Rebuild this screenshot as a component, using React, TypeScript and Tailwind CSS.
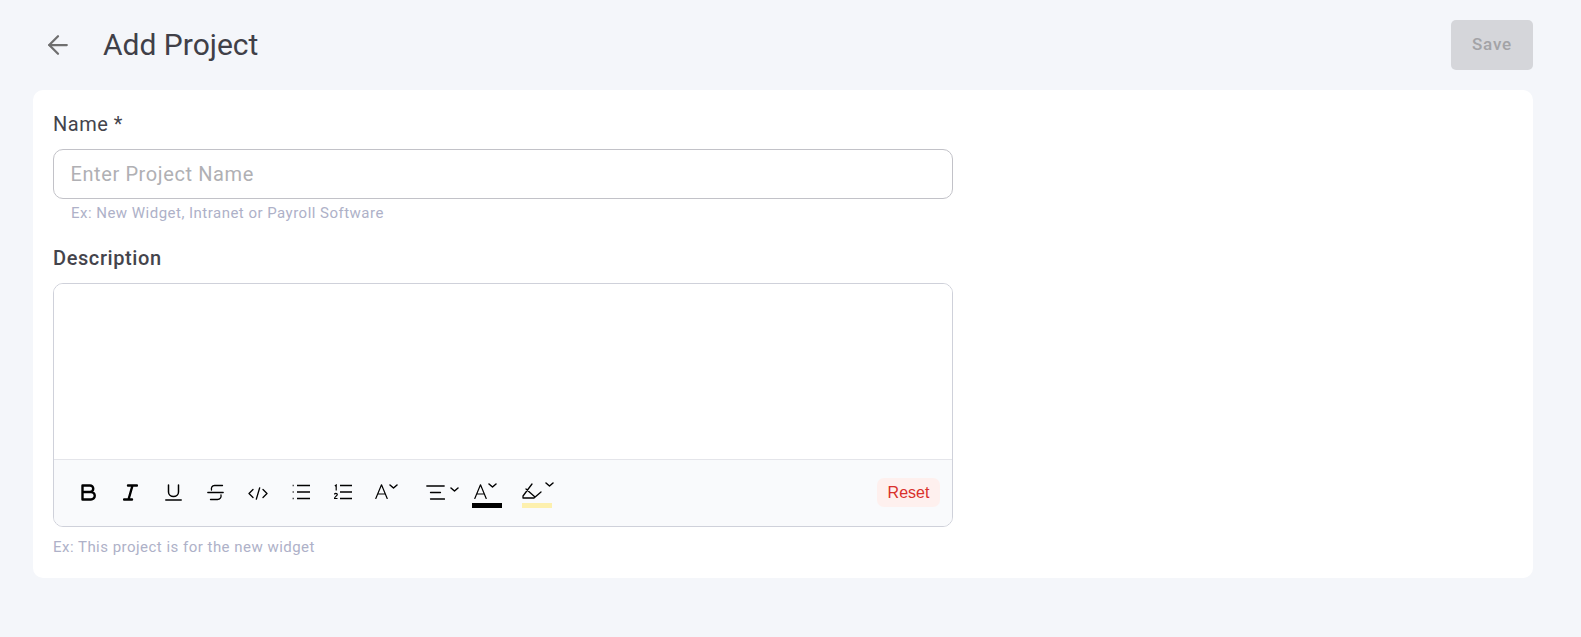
import { ArrowLeft } from "lucide-react";

const stroke = { fill: "none", stroke: "currentColor", strokeWidth: 1.5, strokeLinecap: "round", strokeLinejoin: "round" } as const;

const Chevron = ({ className }: { className: string }) => (
  <svg viewBox="0 0 9 5" className={`h-[5px] w-[9px] shrink-0 ${className}`} {...stroke} strokeWidth={1.5}>
    <path d="M1 1l3.500 3L8 1" />
  </svg>
);

const LetterA = ({ className }: { className: string }) => (
  <svg viewBox="0 0 13 15" className={`h-[15px] w-[13px] shrink-0 ${className}`} {...stroke} strokeWidth={1.2}>
    <path d="M.8 14.500L6.500.8l5.700 13.700M2.800 10h7.400" />
  </svg>
);

export default function App() {
  return (
    <div className="min-h-screen bg-[#f4f6fa] px-[33px] pt-5 pb-[59px] font-['Roboto',sans-serif] text-[#3d3d3d]">
      {/* Header */}
      <header className="flex h-[50px] items-center justify-between pr-[15px]">
        <div className="flex items-center">
          <ArrowLeft className="ml-[10px] h-[30px] w-[30px] text-[#6f6f6f]" strokeWidth={1.8} />
          <h1 className="ml-[30px] text-[30px] leading-[36px] font-normal text-[#404048]">Add Project</h1>
        </div>
        <button className="h-[50px] w-[82px] rounded-[5px] bg-[#d5d6da] text-[17px] font-medium tracking-[0.8px] text-[#a3a3a6]">
          Save
        </button>
      </header>

      {/* Form card */}
      <main className="mt-5 mr-[15px] h-[488px] rounded-[10px] bg-white px-5 pt-[22px]">
        <div className="w-[900px]">
          <label className="block text-[20px] leading-[24px] tracking-[0.5px] text-[#44444c]">Name *</label>
          <input
            placeholder="Enter Project Name"
            className="mt-[13px] h-[50px] w-full rounded-[10px] border border-[#c2c2c8] px-[16.500px] text-[20px] tracking-[0.6px] outline-none placeholder:text-[#b0b0b4]"
          />
          <p className="mt-[5px] pl-[18px] text-[15px] leading-[18px] tracking-[0.48px] text-[#aeb1c8]">
            Ex: New Widget, Intranet or Payroll Software
          </p>

          <label className="mt-[24px] block text-[20px] leading-[24px] font-medium tracking-[0.6px] text-[#44444c]">Description</label>
          <div className="mt-[13px] flex h-[244px] flex-col overflow-hidden rounded-[10px] border border-[#cfd1da]">
            <div className="h-[175px] shrink-0 bg-white" />
            <div className="relative h-[67px] border-t border-[#e4e5ea] bg-[#f9fafc] text-black">
              <div className="flex h-full items-start pt-[24px] pl-[27px]">
                {/* Bold */}
                <svg viewBox="0 0 15 17" className="h-[17px] w-[15px] shrink-0" fill="none" stroke="currentColor" strokeWidth={2.4} strokeLinejoin="round">
                  <path d="M1.500 1.500h7.500a3.200 3.200 0 0 1 0 6.500H1.500zM1.500 8h8.500a3.700 3.700 0 0 1 0 7.500H1.500z" />
                </svg>
                {/* Italic */}
                <svg viewBox="0 0 15 17" className="ml-[27px] h-[17px] w-[15px] shrink-0" fill="none" stroke="currentColor" strokeWidth={2.400} strokeLinecap="round">
                  <path d="M5 1.500h9M1 15.500h8M9.500 1.500L5.500 15.500" />
                </svg>
                {/* Underline */}
                <svg viewBox="0 0 17 17" className="ml-[27px] h-[17px] w-[17px] shrink-0" {...stroke}>
                  <path d="M3.500 1v7a5 4.500 0 0 0 10 0V1M.8 16h15.400" />
                </svg>
                {/* Strikethrough */}
                <svg viewBox="0 0 17 17" className="ml-[25px] h-[17px] w-[17px] shrink-0" {...stroke} strokeWidth={1.300}>
                  <path d="M15.500 1.500H7.500C5 1.500 4 3.500 4.500 6M.8 8.500h15.400M14 11c.5 2.500-1 4.500-3.500 4.500H3.500" />
                </svg>
                {/* Code */}
                <svg viewBox="0 0 20 13" className="mt-[3px] ml-[24px] h-[13px] w-[20px] shrink-0" {...stroke} strokeWidth={1.300}>
                  <path d="M5 2.500L1 6.500l4 4M15 2.500l4 4-4 4M11.700 .8L8.300 12.200" />
                </svg>
                {/* Bullet list */}
                <svg viewBox="0 0 18 16" className="ml-[24px] h-[16px] w-[18px] shrink-0" fill="none" stroke="currentColor" strokeWidth={1.300}>
                  <path d="M5 1.500h13M5 8h13M5 14.500h13" />
                  <path d="M.5 1.500h1.500M.5 8h1.500M.5 14.500h1.500" stroke="#555" />
                </svg>
                {/* Numbered list */}
                <svg viewBox="0 0 18 16" className="ml-[24px] h-[16px] w-[18px] shrink-0" fill="none" stroke="currentColor">
                  <path d="M6 1.500h12M6 8h12M6 14.500h12" strokeWidth={1.300} />
                  <path d="M.8 2l1.400-1v5.500M.5 10.500c0-1.500 2.800-1.500 2.800 0 0 1.200-2.800 2.200-2.800 4h3" strokeWidth={1.200} />
                </svg>
                {/* Font size */}
                <LetterA className="ml-[23px]" />
                <Chevron className="ml-[1px]" />
                {/* Align */}
                <svg viewBox="0 0 19 15" className="mt-[1px] ml-[28px] h-[15px] w-[19px] shrink-0" {...stroke} strokeWidth={1.300}>
                  <path d="M.8 1h17.400M4.500 7.500h10M4.500 14h14" />
                </svg>
                <Chevron className="mt-[3px] ml-[5px]" />
                {/* Text colour */}
                <div className="relative ml-[13px] h-[24px] w-[30px] shrink-0">
                  <LetterA className="absolute top-0 left-[2px]" />
                  <Chevron className="absolute top-[-1px] left-[16px]" />
                  <div className="absolute top-[19px] left-0 h-[5px] w-[30px] bg-black" />
                </div>
                {/* Highlight */}
                <div className="relative ml-[20px] h-[24px] w-[30px] shrink-0">
                  <svg viewBox="0 0 20 16" className="absolute top-[-1px] left-0 h-[16px] w-[20px]" {...stroke} strokeWidth={1.300}>
                    <path d="M10 1L1 13v2h11l7-6M4 6l9 8" />
                  </svg>
                  <Chevron className="absolute top-[-2px] left-[23px]" />
                  <div className="absolute top-[19px] left-0 h-[5px] w-[30px] bg-[#fdf0ae]" />
                </div>
                <button className="absolute top-[18px] right-[12px] h-[29px] w-[63px] rounded-[7px] bg-[#fef0ee] font-['Liberation_Sans',sans-serif] text-[16px] text-[#d9312b]">
                  Reset
                </button>
              </div>
            </div>
          </div>
          <p className="mt-[11px] text-[15px] leading-[18px] tracking-[0.48px] text-[#aeb1c8]">Ex: This project is for the new widget</p>
        </div>
      </main>
    </div>
  );
}
